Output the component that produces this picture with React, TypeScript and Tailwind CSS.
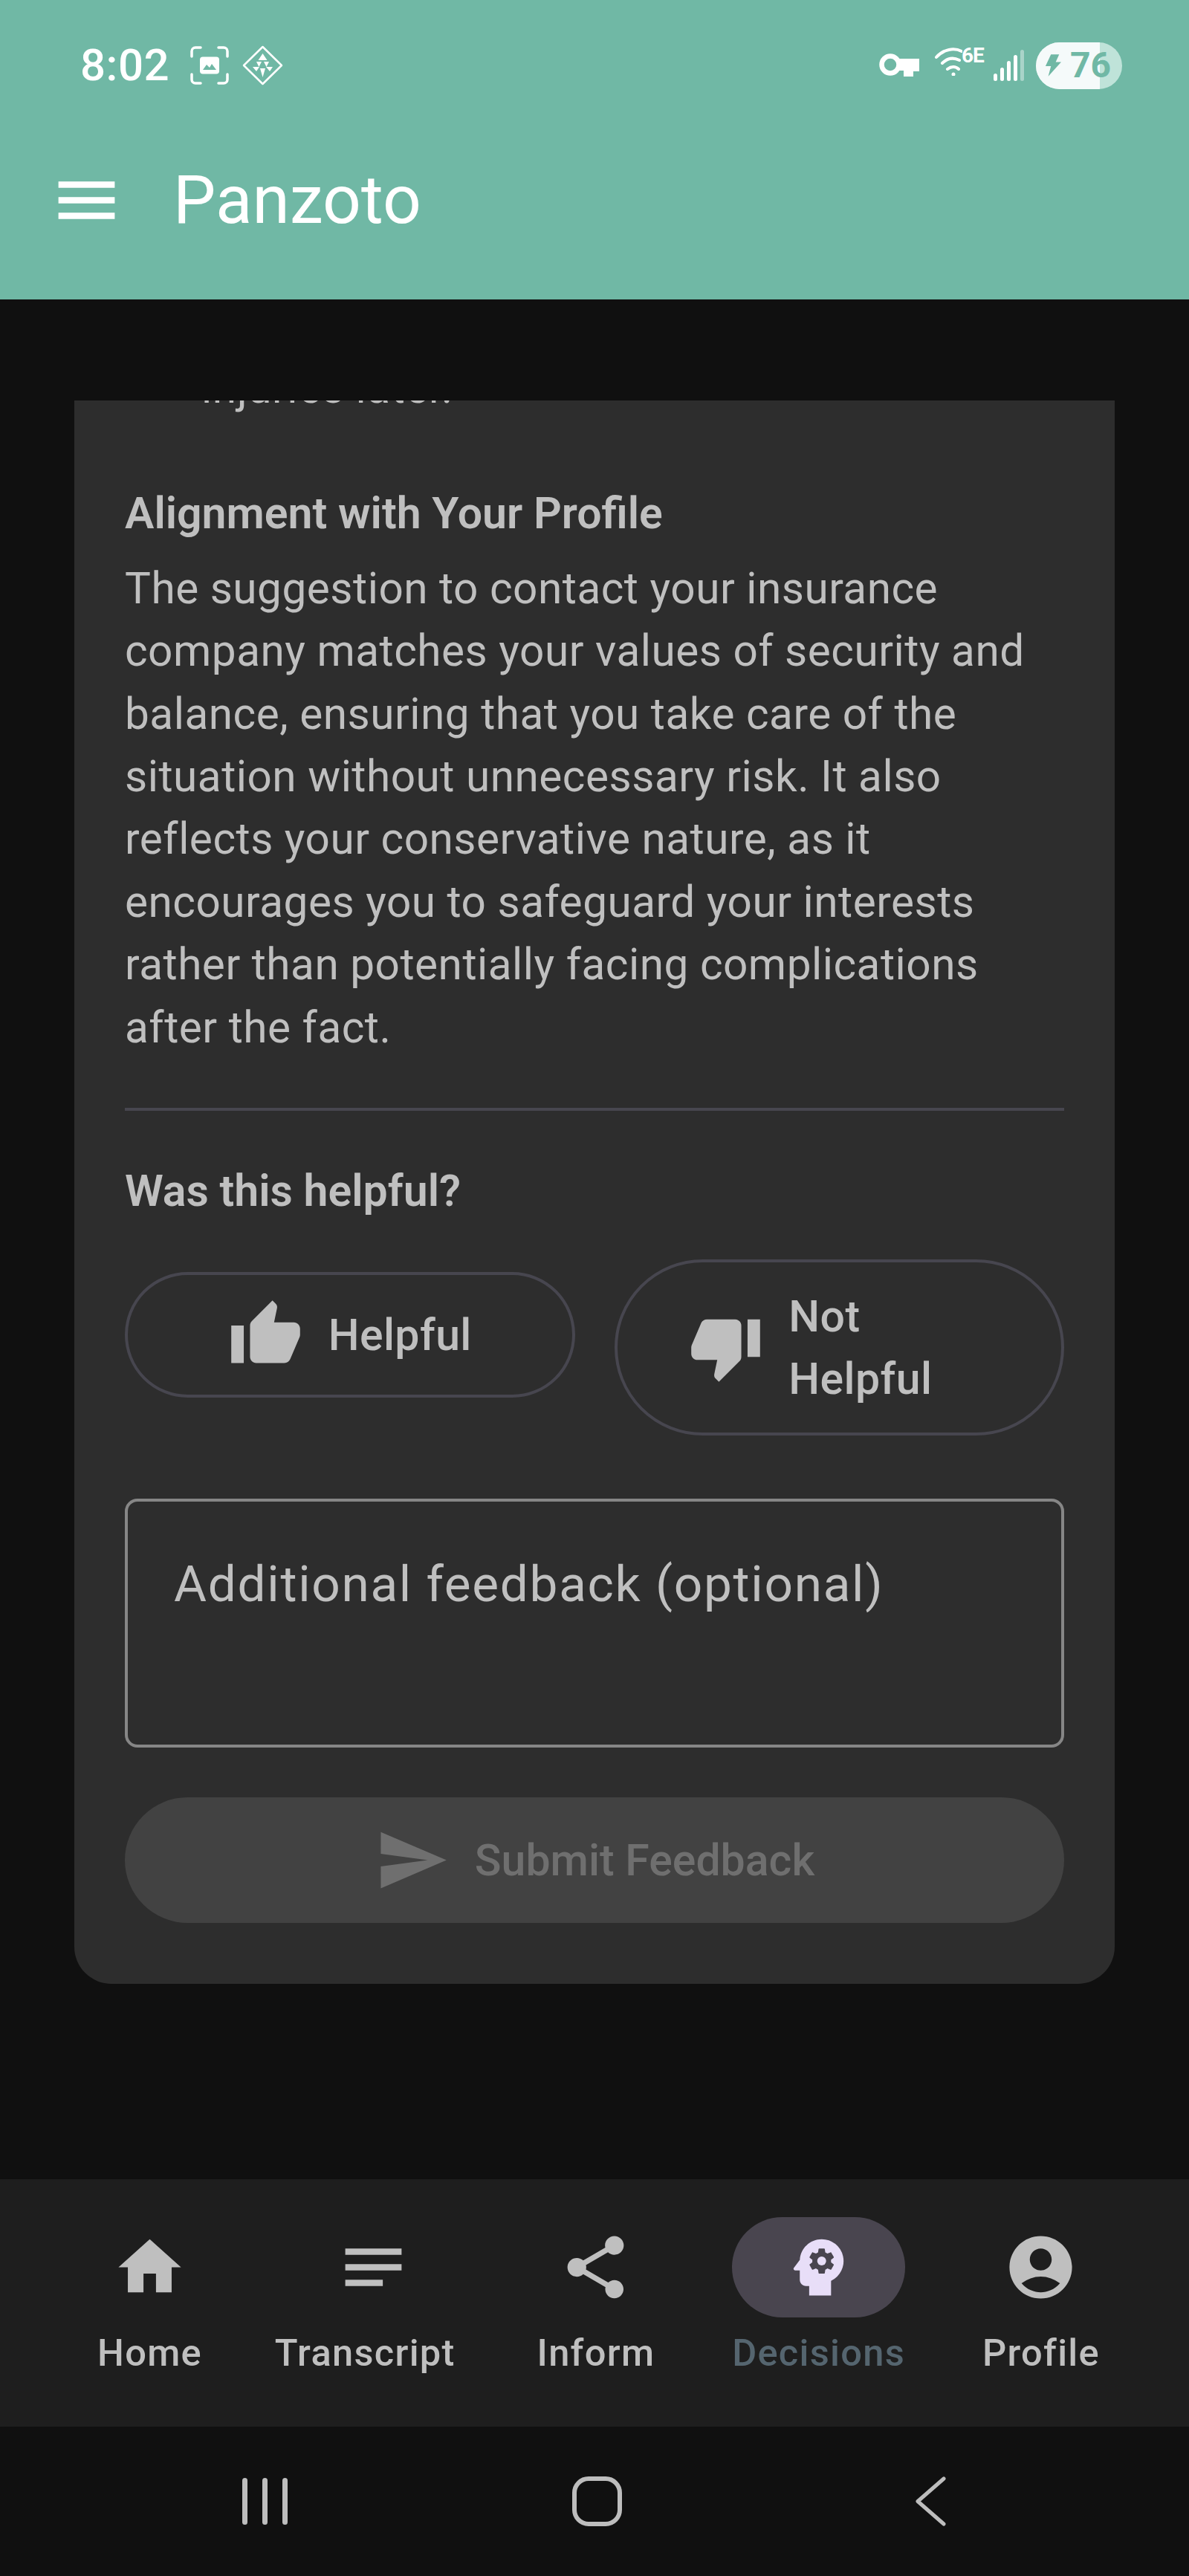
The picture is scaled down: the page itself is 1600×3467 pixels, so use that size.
import { MdAccountCircle, MdHome, MdMenu, MdNotes, MdPsychology, MdSend, MdShare, MdThumbDown, MdThumbUp } from 'react-icons/md';
import type { ReactNode } from 'react';

const ROBOTO = 'font-[Roboto,sans-serif]';

function ScreenshotIcon() {
    return (
        <svg width="52" height="52" viewBox="0 0 52 52" fill="none" className="text-white">
            <path d="M2 14V7a5 5 0 0 1 5-5h7M38 2h7a5 5 0 0 1 5 5v7M50 38v7a5 5 0 0 1-5 5h-7M14 50H7a5 5 0 0 1-5-5v-7" stroke="currentColor" strokeWidth="3.5" strokeLinecap="round" />
            <rect x="13" y="14.500" width="26" height="23" rx="4" fill="currentColor" />
            <path d="M17 32l5-7 4 4 3-5 6 8z" fill="#70b8a5" />
        </svg>
    );
}

function DiamondIcon() {
    return (
        <svg width="55" height="54" viewBox="0 0 55 54" fill="none">
            <path d="M27.500 2L53 27 27.500 52 2 27z" stroke="white" strokeWidth="2.500" strokeLinejoin="round" />
            <path d="M27.500 11l6 9h-12zM19 22h7l-3.500 7zM29 22h7l-3.500 7zM14 29h9l-4 6zM32 29h9l-4 6zM24 31h7l-3.500 12z" fill="white" />
        </svg>
    );
}

function KeyIcon() {
    return (
        <svg width="54" height="32" viewBox="0 0 54 32" fill="none">
            <circle cx="15" cy="15" r="11.500" stroke="white" strokeWidth="6.500" />
            <path d="M26 7h28v17h-8v7H33v-8h-7z" fill="white" />
            <path d="M38 15h8v9h-8z" fill="white" />
        </svg>
    );
}

function WifiIcon() {
    return (
        <div className="relative w-[64px] h-[38px]">
            <svg width="37" height="38" viewBox="0 0 37 38" fill="none">
                <path d="M2 13C12 2 26 0 36 5M10 21c7-7 15-8 23-4M17 29c5-4 11-4 15 0" stroke="white" strokeWidth="4" strokeLinecap="round" />
                <circle cx="25" cy="36" r="2.500" fill="white" />
            </svg>
            <span className="absolute left-[36px] top-[-3px] text-[28px] leading-[28px] font-bold tracking-[-1px] text-white">6E</span>
        </div>
    );
}

function SignalIcon() {
    return (
        <div className="flex items-end gap-[4px] h-[42px]">
            <div className="w-[5px] h-[10px] rounded-full bg-white" />
            <div className="w-[5px] h-[18px] rounded-full bg-white" />
            <div className="w-[5px] h-[27px] rounded-full bg-white" />
            <div className="w-[5px] h-[35px] rounded-full bg-white" />
            <div className="w-[5px] h-[42px] rounded-full bg-white/40" />
        </div>
    );
}

function Battery() {
    return (
        <div className="relative w-[116px] h-[63px] rounded-full overflow-hidden bg-[#bfe3d9] flex items-center">
            <div className="absolute left-0 top-0 bottom-0 w-[86px] bg-[#f5fafa]" />
            <svg width="22" height="30" viewBox="0 0 24 32" className="relative ml-[12px] shrink-0">
                <path d="M9 0h12l-5 11h8L5 32l4-15H1z" fill="#70b8a5" />
            </svg>
            <span className="relative ml-[12px] text-[48px] leading-none font-bold text-[#70b8a5]">76</span>
        </div>
    );
}

function FeedbackButton({ icon, children, className }: { icon: ReactNode; children: ReactNode; className: string }) {
    return (
        <button className={`flex-1 flex items-center justify-center gap-[34px] rounded-full border-[4px] border-[#47464f] text-[59px] leading-[84.4px] tracking-[0.4px] font-medium text-[#bfbfbf] ${className}`}>
            {icon}
            {children}
        </button>
    );
}

function NavItem({ icon, label, active, className = '' }: { icon: ReactNode; label: string; active?: boolean; className?: string }) {
    return (
        <div className={`flex flex-col items-center ${className}`}>
            <div className={`flex items-center justify-center h-[135px] w-[233px] -mx-[50px] rounded-full ${active ? 'bg-[#49454f] text-[#e8def8]' : 'text-[#bfbfbf]'}`}>
                {icon}
            </div>
            <span className={`mt-[14px] text-[50.6px] leading-[67px] tracking-[1.3px] font-medium whitespace-nowrap ${active ? 'text-[#55656f]' : 'text-[#bfbfbf]'}`}>
                {label}
            </span>
        </div>
    );
}

export default function App() {
    return (
        <div className={`w-[1600px] h-[3467px] flex flex-col bg-[#101010] overflow-hidden ${ROBOTO}`}>
            {/* Status bar + app bar */}
            <header className="h-[403px] shrink-0 bg-[#70b8a5] text-white">
                <div className="h-[176px] flex items-center justify-between pl-[108px] pr-[90px]">
                    <div className="flex items-center">
                        <span className="text-[60px] font-medium leading-none tracking-[0.5px]">8:02</span>
                        <div className="ml-[28px]"><ScreenshotIcon /></div>
                        <div className="ml-[18px]"><DiamondIcon /></div>
                    </div>
                    <div className="flex items-center">
                        <KeyIcon />
                        <div className="ml-[21px] mb-[10px]"><WifiIcon /></div>
                        <div className="ml-[15px]"><SignalIcon /></div>
                        <div className="ml-[16px]"><Battery /></div>
                    </div>
                </div>
                <div className="h-[186px] flex items-center pl-[66px]">
                    <MdMenu className="w-[101px] h-[101px]" />
                    <h1 className="ml-[66px] text-[91px] leading-none font-normal">Panzoto</h1>
                </div>
            </header>

            {/* Scrolled content */}
            <main className="flex-1 min-h-0 overflow-hidden pt-[136px] px-[100px]">
                <div className="h-[2131px] overflow-hidden rounded-b-[50px] bg-[#2d2d2d] px-[68px] text-[#bfbfbf]">
                    <p className="-mt-[59px] pl-[103px] text-[58.5px] leading-[84.4px] tracking-[0.55px]">injuries later.</p>
                    <h2 className="mt-[85px] text-[59px] leading-[84.4px] font-semibold">Alignment with Your Profile</h2>
                    <p className="mt-[16px] text-[58.5px] leading-[84.4px] tracking-[0.5px]">
                        The suggestion to contact your insurance company matches your values of security and balance, ensuring that you take care of the situation without unnecessary risk. It also reflects your conservative nature, as it encourages you to safeguard your interests rather than potentially facing complications after the fact.
                    </p>
                    <div className="mt-[66px] h-[4px] bg-[#47464f]" />
                    <h3 className="mt-[66px] text-[59px] leading-[84.4px] font-semibold">Was this helpful?</h3>
                    <div className="mt-[50px] flex items-start gap-[53px]">
                        <FeedbackButton className="mt-[17px] h-[169px]" icon={<MdThumbUp className="w-[101px] h-[101px] shrink-0" />}>
                            <span>Helpful</span>
                        </FeedbackButton>
                        <FeedbackButton className="h-[237px]" icon={<MdThumbDown className="w-[101px] h-[101px] shrink-0" />}>
                            <span className="w-[271px] text-left">Not<br />Helpful</span>
                        </FeedbackButton>
                    </div>
                    <div className="mt-[85px] h-[335px] rounded-[17px] border-[4px] border-[#868686] pl-[62px] pt-[66px] text-[67.5px] leading-[90px] tracking-[1.7px] text-[#bfbfbf]">
                        Additional feedback (optional)
                    </div>
                    <button className="mt-[67px] w-full h-[169px] flex items-center justify-center gap-[34px] rounded-full bg-[#424242] text-[59px] font-medium text-[#6f6f6f]">
                        <MdSend className="w-[101px] h-[101px] shrink-0" />
                        Submit Feedback
                    </button>
                </div>
            </main>

            {/* Bottom navigation */}
            <nav className="h-[333px] shrink-0 bg-[#1e1e1e] flex justify-between items-start pt-[51px] pl-[131px] pr-[120px]">
                <NavItem icon={<MdHome className="w-[101px] h-[101px]" />} label="Home" />
                <NavItem className="-ml-[6px] mr-[6px]" icon={<MdNotes className="ml-[22px] w-[101px] h-[101px]" />} label="Transcript" />
                <NavItem icon={<MdShare className="w-[101px] h-[101px]" />} label="Inform" />
                <NavItem active icon={<MdPsychology className="w-[101px] h-[101px]" />} label="Decisions" />
                <NavItem icon={<MdAccountCircle className="w-[101px] h-[101px]" />} label="Profile" />
            </nav>

            {/* Android system nav */}
            <div className="h-[201px] shrink-0 flex items-center text-[#bdbdbd]">
                <div className="ml-[326px] flex gap-[20px] h-[63px]">
                    <div className="w-[7px] rounded-full bg-[#bdbdbd]" />
                    <div className="w-[7px] rounded-full bg-[#bdbdbd]" />
                    <div className="w-[7px] rounded-full bg-[#bdbdbd]" />
                </div>
                <div className="ml-[383px] w-[67px] h-[67px] rounded-[22px] border-[6px] border-[#bdbdbd]" />
                <svg width="41" height="67" viewBox="0 0 41 67" fill="none" className="ml-[395px]">
                    <path d="M38 3L3 33.500 38 64" stroke="currentColor" strokeWidth="5" strokeLinecap="round" strokeLinejoin="round" />
                </svg>
            </div>
        </div>
    );
}
